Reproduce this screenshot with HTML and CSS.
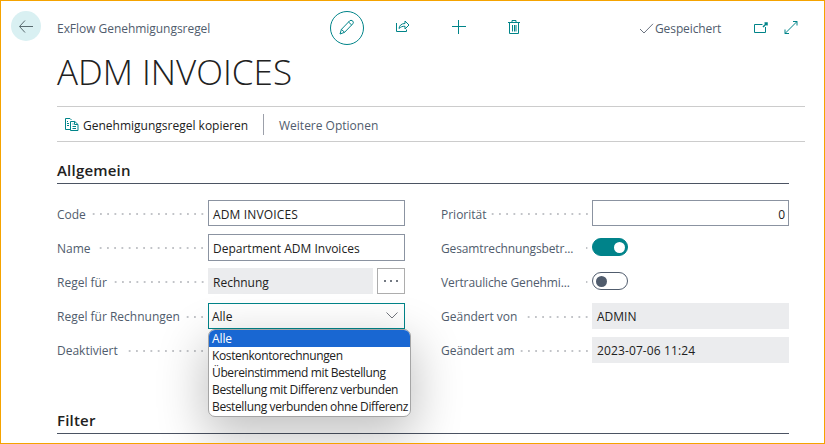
FILE: index.html
```html
<!DOCTYPE html>
<html lang="de">
<head>
<meta charset="utf-8">
<title>ExFlow Genehmigungsregel</title>
<link rel="stylesheet" href="styles.css">
</head>
<body>
<div class="page">
  <header class="topbar">
    <button class="back" aria-label="Zurück"><svg width="16" height="14" viewBox="0 0 16 14"><path d="M15 7.500H1.5M7 1.500L1.500 7.500L7 13.500"/></svg></button>
    <span class="caption">ExFlow Genehmigungsregel</span>
    <nav class="tools">
      <span class="tool edit"><svg width="16" height="16" viewBox="0 0 16 16"><path d="M1 15l1.4-4.6L10.6 1.9q1.3-1.2 2.9-.1 1.6 1.4.3 3L5.600 13.300zM2.400 10.400l3.200 2.900M9.500 3l3.200 3"/></svg></span>
      <span class="tool share"><svg width="16" height="14" viewBox="0 0 16 14"><path d="M1.500 4v8.500H11.500V10.500M4 9.500c.3-3 2.400-5 6-5V2l4 4-4 4V7.300C7.500 7 5.500 8 4 9.500z"/></svg></span>
      <span class="tool add"><svg width="14" height="14" viewBox="0 0 14 14"><path d="M6.500 0v14M0 6.500h14"/></svg></span>
      <span class="tool bin"><svg width="12" height="14" viewBox="0 0 12 14"><path d="M0 2.500h12M4 2.500v-2h4v2M1.500 2.500v11h9V2.500M4.500 5v6.500M6.500 5v6.500M8 5v6.500"/></svg></span>
    </nav>
    <span class="saved"><svg width="15" height="11" viewBox="0 0 15 11"><path d="M1 6l4 4L14 .8"/></svg><span>Gespeichert</span></span>
    <span class="window"><svg width="14" height="12" viewBox="0 0 14 12"><path d="M8.500 2.500H.5v8h11V5"/><path class="strong" d="M9 5l3.500-3.500M10.500 1h2.500v2.500"/></svg><svg width="14" height="14" viewBox="0 0 14 14"><path d="M1 12.500L13 .5M9 .5h4v4M1 8.500v4h4"/></svg></span>
  </header>
  <h1>ADM INVOICES</h1>
  <div class="actions">
    <svg class="copy" width="14" height="14" viewBox="0 0 14 14"><path d="M5 11.500H.5V.5H5l1.500 1.500M5.500 3.500h4.300l3.200 3v6H5.500zM9.500 3.500v3H13M2 3.500h1M2 5.500h2M2 7.500h2M7.500 6h1M7.500 8.500h3.500M7.500 10.500h3.500"/></svg>
    <span class="copy-label">Genehmigungsregel kopieren</span>
    <span class="more">Weitere Optionen</span>
  </div>
  <h2>Allgemein</h2>
  <div class="columns">
    <div class="column">
      <div class="field"><span class="label">Code</span><i class="dots" style="--n:16"></i><span class="input spaced">ADM INVOICES</span></div>
      <div class="field"><span class="label">Name</span><i class="dots" style="--n:15"></i><span class="input tall">Department ADM Invoices</span></div>
      <div class="field"><span class="label">Regel für</span><i class="dots" style="--n:13"></i><span class="lookup"><span class="readonly">Rechnung</span><button aria-label="Auswählen"><b></b><b></b><b></b></button></span></div>
      <div class="field"><span class="label">Regel für Rechnungen</span><i class="dots" style="--n:3"></i>
        <div class="select"><span>Alle</span><svg width="12" height="7" viewBox="0 0 12 7"><path d="M.5.5L6 6 11.500.5"/></svg>
          <ul class="menu"><li class="active">Alle</li><li>Kostenkontorechnungen</li><li>Übereinstimmend mit Bestellung</li><li>Bestellung mit Differenz verbunden</li><li>Bestellung verbunden ohne Differenz</li></ul>
        </div>
      </div>
      <div class="field"><span class="label">Deaktiviert</span><i class="dots" style="--n:11"></i><span class="slot"><span class="toggle"></span></span></div>
    </div>
    <div class="column">
      <div class="field"><span class="label">Priorität</span><i class="dots" style="--n:14"></i><span class="input number">0</span></div>
      <div class="field"><span class="label snug">Gesamtrechnungsbetr...</span><i class="dots" style="--n:1"></i><span class="slot"><span class="toggle on"></span></span></div>
      <div class="field"><span class="label snug">Vertrauliche Genehmi...</span><i class="dots" style="--n:1"></i><span class="slot"><span class="toggle"></span></span></div>
      <div class="field"><span class="label">Geändert von</span><i class="dots" style="--n:9"></i><span class="readonly">ADMIN</span></div>
      <div class="field"><span class="label">Geändert am</span><i class="dots" style="--n:10"></i><span class="readonly date">2023-07-06 11:24</span></div>
    </div>
  </div>
  <h2 class="filter">Filter</h2>
</div>
</body>
</html>
```
FILE: styles.css
```css
* { box-sizing: border-box; }
body { margin: 0; font-family: "Open Sans", "Noto Sans", sans-serif; font-size: 12px; color: #212121; background: #fff; }
.page { width: 825px; height: 444px; border: 1px solid #f5a300; overflow: hidden; padding: 10px 19px 0 10px; }
svg { fill: none; stroke: #008489; stroke-width: 1; flex: none; display: block; }
button { padding: 0; background: #fff; }

.topbar { display: flex; height: 34px; align-items: flex-start; margin-right: -19px; }
.back { width: 30px; height: 30px; border: 0; border-radius: 50%; background: #d9f0f2; display: grid; place-items: center; }
.back svg { stroke: #596b70; margin-top: -1px; }
.caption { margin-left: 16px; width: 273px; line-height: 36px; color: #505c6d; white-space: nowrap; letter-spacing: -.04px; }
.tools { display: flex; width: 309px; }
.tool { width: 34px; height: 34px; display: grid; place-items: center; margin-right: 22px; }
.tool svg { margin-top: -2px; }
.edit { border: 1px solid #008489; border-radius: 50%; }
.share svg { margin-top: -4px; }
.bin svg { margin-left: -2px; }
.saved { display: flex; line-height: 36px; color: #505c6d; width: 115px; letter-spacing: -.1px; }
.saved svg { margin: 12px 1px 0 0; stroke: #6b7380; }
.window { display: flex; gap: 16px; padding-top: 10px; }
.window svg:first-child { margin-top: 1px; }
.strong { stroke-width: 1.5; }

h1 { margin: 0 0 0 46px; height: 61px; line-height: 54px; font-size: 35px; font-weight: 300; white-space: nowrap; }
.actions { margin-left: 46px; height: 36px; border-top: 1px solid #ccc; border-bottom: 1px solid #ccc; display: flex; align-items: center; padding: 1px 0 0 8px; white-space: nowrap; }
.copy { margin: 0 4px 0 0; }
.copy-label { width: 180px; padding-top: 2px; }
.more { border-left: 1px solid #9ca0aa; height: 21px; line-height: 23px; padding-left: 15px; color: #505c6d; }
h2 { margin: 17px 16px 0 46px; height: 25px; line-height: 22px; font-size: 15px; font-weight: 600; letter-spacing: .2px; border-bottom: 1px solid #4b5362; }

.columns { display: grid; grid-template-columns: 348px 348px; column-gap: 36px; margin: 16px 0 0 46px; }
.field { display: flex; height: 34.2px; align-items: flex-start; }
.label { line-height: 28px; color: #505c6d; white-space: nowrap; }
.field:nth-child(-n+3) .label { line-height: 29px; }
.snug { letter-spacing: -.12px; }
.dots { height: 28px; width: calc(var(--n) * 7.25px); margin: 0 2px 0 auto; flex: none; background: radial-gradient(circle at 50% 50%, #c2c4c8 0 .7px, transparent 1.2px) right center / 7.25px 28px repeat-x; }
.input, .readonly, .select, .slot, .lookup { width: 197px; height: 26px; flex: none; white-space: nowrap; }
.input, .readonly { padding-left: 5px; line-height: 28px; }
.input { border: 1px solid #8b93a1; padding-left: 4px; line-height: 27px; background: #fff; }
.spaced { letter-spacing: .15px; }
.date { letter-spacing: .12px; }
.tall { height: 27px; }
.number { text-align: right; padding-right: 3px; }
.readonly { background: #ebecee; }
.lookup { display: flex; gap: 4px; }
.lookup .readonly { width: 165px; line-height: 29px; }
.lookup button { width: 28px; height: 26px; border: 1px solid #adadad; display: flex; gap: 4px; align-items: center; justify-content: center; }
.lookup b { width: 2px; height: 2px; background: #454d59; border-radius: 1px; }
.select { position: relative; height: 26px; border: 1px solid #008489; background: #fff; display: flex; align-items: center; justify-content: space-between; padding: 1px 6px 0 3px; }
.select > svg { stroke: #73767d; margin-top: -2px; }
.menu { position: absolute; left: -1px; top: 25px; width: 203px; height: 88px; margin: 0; padding: 0; list-style: none; background: #fff; border: 1px solid #a5a5a5; border-radius: 7px; box-shadow: 0 16px 48px 4px rgba(0,0,0,.24); overflow: hidden; z-index: 1; }
.menu li { height: 17px; line-height: 18px; padding-left: 3px; white-space: nowrap; letter-spacing: -.37px; }
.menu .active { background: #1967d2; color: #fff; letter-spacing: -.1px; }
.slot { padding-top: 4px; }
.toggle { display: block; width: 36px; height: 18px; border: 1px solid #505c6d; border-radius: 9px; padding: 3px; }
.toggle::before { content: ""; display: block; width: 11px; height: 11px; border-radius: 50%; background: #505c6d; }
.on { background: #00838a; border-color: #00838a; }
.on::before { margin-left: 18px; background: #fff; }
.filter { margin-top: 38px; }
```
